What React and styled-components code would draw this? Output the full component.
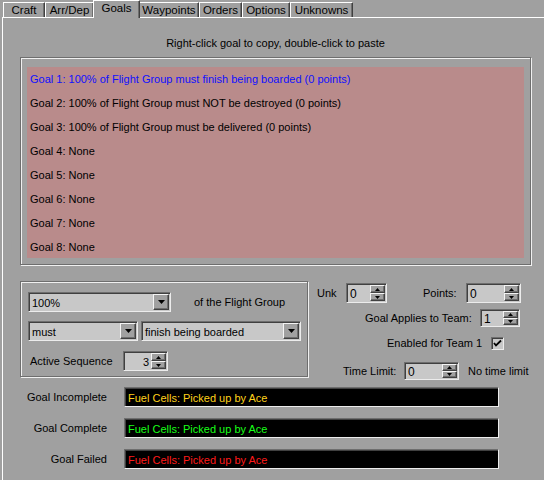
import React from 'react';
import styled, { createGlobalStyle } from 'styled-components';

const GlobalStyle = createGlobalStyle`
  html, body {
    margin: 0;
    padding: 0;
    background: #a0a0a0;
  }
  body {
    font-family: "Liberation Sans", Arial, sans-serif;
    font-size: 11px;
    color: #000;
  }
`;

const Root = styled.div`
  width: 544px;
  height: 480px;
  overflow: hidden;
  background: #a0a0a0;
  padding-left: 2px;
  box-sizing: border-box;
`;

const TabBar = styled.div`
  display: flex;
  align-items: flex-end;
  height: 17px;
  padding-left: 1px;
`;

const Tab = styled.div`
  box-sizing: border-box;
  width: ${p => p.$w}px;
  height: ${p => (p.$active ? 18 : 15)}px;
  margin: ${p => (p.$active ? '0 -1px -1px -1px' : '0')};
  position: relative;
  z-index: ${p => (p.$active ? 1 : 0)};
  background: #a0a0a0;
  border-top: 1px solid #fff;
  border-left: 1px solid #fff;
  border-right: 1px solid #404040;
  box-shadow: inset -1px 0 0 #6e6e6e;
  display: flex;
  justify-content: center;
  align-items: ${p => (p.$active ? 'flex-start' : 'center')};
  padding-top: ${p => (p.$active ? 1 : 0)}px;
  font-size: 11.5px;
  line-height: 13px;
`;

const Panel = styled.div`
  border-top: 1px solid #fff;
  border-left: 1px solid #fff;
  padding-left: 17px;
  height: 463px;
  box-sizing: border-box;
`;

const Hint = styled.div`
  margin-top: 18px;
  width: 511px;
  text-align: center;
  line-height: 14px;
`;

const Etched = styled.div`
  box-sizing: border-box;
  border: 1px solid #6e6e6e;
  box-shadow: inset 1px 1px 0 #f0f0f0, 1px 1px 0 #f0f0f0;
`;

const ListGroup = styled(Etched)`
  margin-top: 7px;
  width: 511px;
  height: 208px;
  padding: 9px 6px 6px 6px;
`;

const GoalList = styled.div`
  height: 191px;
  background: #b98b8b;
  padding-left: 3px;
  display: flex;
  flex-direction: column;
`;

const GoalItem = styled.div`
  height: 24.3px;
  line-height: 24px;
  color: ${p => (p.$selected ? '#1010ff' : '#000')};
  white-space: nowrap;
`;

const Middle = styled.div`
  display: flex;
  align-items: flex-start;
  margin-top: 16px;
`;

const CriteriaBox = styled(Etched)`
  width: 288px;
  height: 96px;
  padding: 10px 0 0 7px;
  display: flex;
  flex-direction: column;
`;

const Row = styled.div`
  display: flex;
  align-items: center;
  margin-top: ${p => p.$mt || 0}px;
  padding-left: ${p => p.$pl || 0}px;
`;

const Label = styled.span`
  display: inline-block;
  width: ${p => (p.$w ? `${p.$w}px` : 'auto')};
  margin-left: ${p => p.$ml || 0}px;
  text-align: ${p => p.$align || 'left'};
  white-space: nowrap;
  line-height: 14px;
`;

const Sunken = styled.div`
  box-sizing: border-box;
  width: ${p => p.$w}px;
  height: ${p => p.$h}px;
  margin-left: ${p => p.$ml || 0}px;
  background: #c8c8c8;
  border: 1px solid;
  border-color: #6e6e6e #ececec #ececec #6e6e6e;
  box-shadow: inset 1px 1px 0 #404040;
  display: flex;
  align-items: stretch;
  padding: 1px 0 0 1px;
`;

const FieldText = styled.div`
  flex: 1;
  display: flex;
  align-items: center;
  justify-content: ${p => (p.$right ? 'flex-end' : 'flex-start')};
  padding: 0 2px 0 2px;
  font-size: ${p => p.$fs || 11}px;
  white-space: nowrap;
  overflow: hidden;
`;

const Raised = styled.div`
  box-sizing: border-box;
  background: #a0a0a0;
  border: 1px solid;
  border-color: #f4f4f4 #404040 #404040 #f4f4f4;
  box-shadow: inset -1px -1px 0 #6e6e6e;
  display: flex;
  align-items: center;
  justify-content: center;
`;

const DropBtn = styled(Raised)`
  width: 16px;
  margin: 0 1px 1px 0;
`;

const SpinCol = styled.div`
  width: 15px;
  display: flex;
  flex-direction: column;
  margin: 0 1px 1px 0;
`;

const SpinBtn = styled(Raised)`
  flex: 1;
`;

const Check = styled(Sunken)`
  width: 13px;
  height: 13px;
  padding: 0;
  align-items: center;
  justify-content: center;
  margin-left: 0;
`;

const Messages = styled.div`
  margin-top: 7px;
  display: flex;
  flex-direction: column;
  gap: 11px;
`;

const MsgRow = styled.div`
  display: flex;
  align-items: center;
  height: 20px;
`;

const MsgField = styled.div`
  box-sizing: border-box;
  width: 375px;
  height: 20px;
  margin-left: 17px;
  background: #000;
  border: 1px solid;
  border-color: #6e6e6e #ececec #ececec #6e6e6e;
  box-shadow: inset 1px 1px 0 #404040;
  color: ${p => p.$color};
  padding: 1px 0 0 3px;
  display: flex;
  align-items: center;
  font-size: 11px;
`;

const Settings = styled.div`
  display: flex;
  flex-direction: column;
  margin-left: 9px;
  padding-top: 2px;
`;

const Arrow = ({ up, size = 3 }) => (
  <svg width={size * 2 + 1} height={size + 1} viewBox={`0 0 ${size * 2 + 1} ${size + 1}`}>
    <polygon
      points={up ? `${size + 0.5},0 ${size * 2 + 1},${size + 1} 0,${size + 1}` : `0,0 ${size * 2 + 1},0 ${size + 0.5},${size + 1}`}
      fill="#000"
    />
  </svg>
);

const Combo = ({ w, value, ml }) => (
  <Sunken $w={w} $h={20} $ml={ml}>
    <FieldText>{value}</FieldText>
    <DropBtn>
      <Arrow size={3} />
    </DropBtn>
  </Sunken>
);

const Spinner = ({ w, h = 20, value, right, ml, fs }) => (
  <Sunken $w={w} $h={h} $ml={ml}>
    <FieldText $right={right} $fs={fs}>{value}</FieldText>
    <SpinCol>
      <SpinBtn><Arrow up size={2} /></SpinBtn>
      <SpinBtn><Arrow size={2} /></SpinBtn>
    </SpinCol>
  </Sunken>
);

const tabs = [
  { name: 'Craft', w: 42 },
  { name: 'Arr/Dep', w: 49 },
  { name: 'Goals', w: 47, active: true },
  { name: 'Waypoints', w: 60 },
  { name: 'Orders', w: 43 },
  { name: 'Options', w: 48 },
  { name: 'Unknowns', w: 63 },
];

const goals = [
  'Goal 1: 100% of Flight Group must finish being boarded (0 points)',
  'Goal 2: 100% of Flight Group must NOT be destroyed (0 points)',
  'Goal 3: 100% of Flight Group must be delivered (0 points)',
  'Goal 4: None',
  'Goal 5: None',
  'Goal 6: None',
  'Goal 7: None',
  'Goal 8: None',
];

const messages = [
  { label: 'Goal Incomplete', color: '#ffd21a' },
  { label: 'Goal Complete', color: '#18ff18' },
  { label: 'Goal Failed', color: '#ff1a1a' },
];

export default function App() {
  return (
    <>
      <GlobalStyle />
      <Root>
        <TabBar>
          {tabs.map(t => (
            <Tab key={t.name} $w={t.w} $active={t.active}>{t.name}</Tab>
          ))}
        </TabBar>
        <Panel>
          <Hint>Right-click goal to copy, double-click to paste</Hint>
          <ListGroup>
            <GoalList>
              {goals.map((g, i) => (
                <GoalItem key={g} $selected={i === 0}>{g}</GoalItem>
              ))}
            </GoalList>
          </ListGroup>

          <Middle>
            <CriteriaBox>
              <Row>
                <Combo w={143} value="100%" />
                <Label $ml={23}>of the Flight Group</Label>
              </Row>
              <Row $mt={9}>
                <Combo w={110} value="must" />
                <Combo w={160} value="finish being boarded" ml={3} />
              </Row>
              <Row $mt={10} $pl={2}>
                <Label $w={93}>Active Sequence</Label>
                <Spinner w={45} value="3" right />
              </Row>
            </CriteriaBox>

            <Settings>
              <Row>
                <Label $w={29}>Unk</Label>
                <Spinner w={41} value="0" fs={12} />
                <Label $w={43} $ml={36}>Points:</Label>
                <Spinner w={55} value="0" fs={12} />
              </Row>
              <Row $mt={6} $pl={48}>
                <Label $w={115}>Goal Applies to Team:</Label>
                <Spinner w={40} h={18} value="1" fs={12} />
              </Row>
              <Row $mt={9} $pl={70}>
                <Label $w={104}>Enabled for Team 1</Label>
                <Check>
                  <svg width="9" height="9" viewBox="0 0 9 9">
                    <polyline points="1,4 3,6.5 8,1.5" fill="none" stroke="#000" strokeWidth="1.8" />
                  </svg>
                </Check>
              </Row>
              <Row $mt={12} $pl={26}>
                <Label $w={61}>Time Limit:</Label>
                <Spinner w={55} h={18} value="0" fs={12} />
                <Label $ml={9}>No time limit</Label>
              </Row>
            </Settings>
          </Middle>

          <Messages>
            {messages.map(m => (
              <MsgRow key={m.label}>
                <Label $w={87} $align="right">{m.label}</Label>
                <MsgField $color={m.color}>Fuel Cells: Picked up by Ace</MsgField>
              </MsgRow>
            ))}
          </Messages>
        </Panel>
      </Root>
    </>
  );
}
